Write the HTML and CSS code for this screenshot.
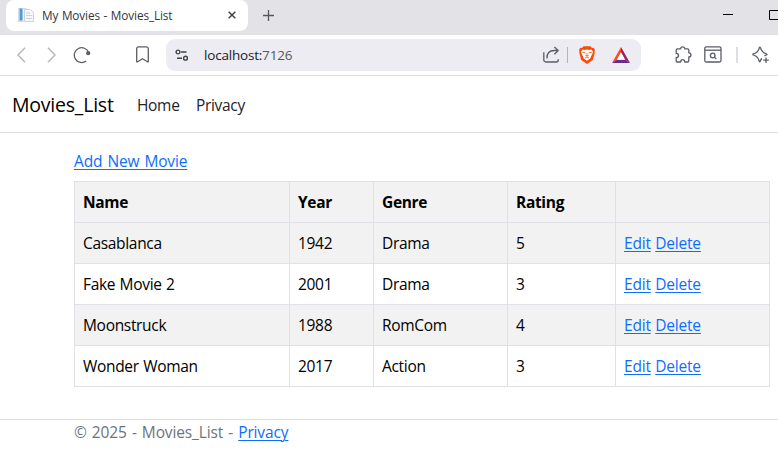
FILE: index.html
```html
<!DOCTYPE html>
<html lang="en">
<head>
<meta charset="utf-8">
<title>My Movies - Movies_List</title>
<link rel="stylesheet" href="styles.css">
</head>
<body>
<div class="tabstrip">
  <div class="tab">
    <svg class="favicon" width="16" height="16" viewBox="0 0 16 16"><path d="M.5 1.5h8l2 2v11h-10z" fill="#edf2f6" stroke="#d5dde4"/><path d="M1 1.5h3.5v12H1z" fill="#4d9ad5"/><path d="M1 1.5h1v12H1z" fill="#a5cdea"/><path d="M6.5 2.5h6l3 3v9h-9z" fill="#f5f7f9" stroke="#ccd4db"/><path d="M8 6h4M8 8.5h6M8 11.5h6" stroke="#cbd4dc"/></svg>
    <span class="tab-title">My Movies - Movies_List</span>
    <svg class="tab-close" width="8" height="8" viewBox="0 0 8 8"><path d="M.7.7l6.6 6.6M7.3.7L.7 7.3" stroke="#404349" stroke-width="1.5"/></svg>
  </div>
  <svg class="new-tab" width="11" height="11" viewBox="0 0 11 11"><path d="M5.5 0v11M0 5.5h11" stroke="#55575d" stroke-width="1.3"/></svg>
  <svg class="minimize" width="10" height="11" viewBox="0 0 10 11"><path d="M0 4.5h10" stroke="#000"/></svg>
  <svg class="maximize" width="10" height="10" viewBox="0 0 10 10"><path d="M.5.5h9v9h-9z" fill="none" stroke="#000"/></svg>
</div>
<div class="toolbar">
  <svg class="back" width="9" height="16" viewBox="0 0 9 16"><path d="M8 .8L1 8l7 7.2" class="nav-stroke"/></svg>
  <svg class="forward" width="9" height="16" viewBox="0 0 9 16"><path d="M1 .8L8 8l-7 7.2" class="nav-stroke"/></svg>
  <svg class="reload" width="18" height="18" viewBox="0 0 18 18"><path d="M13.2 15A7.4 7.4 0 1 1 15.6 6.5" class="line"/><circle cx="15.2" cy="7.2" r="2.1" fill="#5b5e66"/></svg>
  <svg class="bookmark" width="13" height="17" viewBox="0 0 13 17"><path d="M2.7.8h7.6a2 2 0 0 1 2 2v12.6q0 .8-.8.4L6.5 12.7l-5 3.1q-.8.4-.8-.4V2.8a2 2 0 0 1 2-2z" class="line"/></svg>
  <div class="address">
    <svg class="tune" width="14" height="12" viewBox="0 0 14 12"><g fill="none" stroke="#3f424a" stroke-width="1.4"><circle cx="3" cy="3" r="1.9"/><path d="M6 3h5.5M2 9.2h5"/><circle cx="10.5" cy="9.2" r="1.9"/></g></svg>
    <span class="url">localhost:<span class="port">7126</span></span>
    <svg class="share" width="17" height="17" viewBox="0 0 17 17"><path d="M.8 6.2V14a2 2 0 0 0 2 2h10.4a2 2 0 0 0 2-2v-.8M3.9 12.5c0-5 2.5-8 7.2-8h4M11.4 1l3.8 3.5-3.8 3.7" class="line"/></svg>
    <span class="rule"></span>
    <svg class="shield" width="16" height="18" viewBox="0 0 16 18"><path d="M4.5.2h7l1.5 1.7 1.6-.1L16 4l-.5 1.6.2 1.5-1.9 6.8L8 18l-5.8-4.1L.3 7.1l.2-1.5L0 4l1.4-2.2 1.6.1z" fill="#fb4b0b"/><path d="M3.5 3.6l2.2.5L8 3.5l2.3.6 2.2-.5 1.5 2.2-.9 2.6-1.2 2.1-.6 2L8 14.8l-3.3-2.3-.6-2-1.2-2.1L2 5.8z" fill="#fff"/><path d="M3.3 6.3l3.1.5M12.7 6.3l-3.1.5M8 7v3M6.3 9.3L8 10.2l1.7-.9M6 12l2-1 2 1" fill="none" stroke="#fb4b0b" stroke-width=".8"/></svg>
    <svg class="triangle" width="18" height="16" viewBox="0 0 18 16"><path d="M9 0L0 16l5-3L9 5.6z" fill="#ff4724"/><path d="M9 0l9 16-5-3L9 5.6z" fill="#9e1f63"/><path d="M0 16h18l-5-3.3H5z" fill="#662d91"/><path d="M9 5.3L13.2 12.8H4.8z" fill="#fff"/></svg>
  </div>
  <svg class="puzzle" width="18" height="18" viewBox="0 0 18 18"><path d="M3.5 2.8h3.1C6.7 1.5 7.5.8 8.7.8s2 .7 2.1 2h2.7q1.3 0 1.3 1.3v2.7c1.3.1 2.2.9 2.2 2.1s-.9 2-2.2 2.1v3.7q0 1.3-1.3 1.3h-2.8c0-1.6-.7-2.4-2-2.4s-2 .8-2 2.4H3.5q-1.3 0-1.3-1.3v-3c1.5-.1 2.3-.9 2.3-2.2s-.8-2-2.3-2.1V4.1q0-1.3 1.3-1.3z" class="line"/></svg>
  <svg class="window" width="18" height="17" viewBox="0 0 18 17"><rect x=".8" y=".8" width="16.2" height="15.2" rx="1.5" class="line"/><path d="M1 4.2h16" class="line"/><circle cx="8.7" cy="9.5" r="2.3" class="line"/><path d="M10.4 11.1l2 2" class="line"/></svg>
  <span class="rule rule-light"></span>
  <svg class="sparkle" width="18" height="18" viewBox="0 0 18 18"><path d="M10 12.4Q8.8 13.2 8.2 15.3Q7.7 16.3 7.2 15.3Q6.3 10.6 1.5 9Q.2 8.5 1.5 7.9Q6.2 6.5 7.3 1.8Q7.8.4 8.4 1.8Q9.8 6.6 14.3 7.9Q15.6 8.4 14.3 9L12.4 9.8" class="line"/><path d="M14 11.5v5.5M11.3 14.2h5.5" class="line"/></svg>
</div>
<header class="site-header">
  <span class="brand">Movies_List</span>
  <span class="nav-link home">Home</span>
  <span class="nav-link privacy">Privacy</span>
</header>
<main class="content">
  <a class="add">Add New Movie</a>
  <table class="movies">
    <colgroup><col class="c-name"><col class="c-year"><col class="c-genre"><col class="c-rating"><col class="c-actions"></colgroup>
    <thead><tr><th>Name</th><th>Year</th><th>Genre</th><th>Rating</th><th></th></tr></thead>
    <tbody>
      <tr><td>Casablanca</td><td>1942</td><td>Drama</td><td>5</td><td><a>Edit</a> <a>Delete</a></td></tr>
      <tr><td>Fake Movie 2</td><td>2001</td><td>Drama</td><td>3</td><td><a>Edit</a> <a>Delete</a></td></tr>
      <tr><td>Moonstruck</td><td>1988</td><td>RomCom</td><td>4</td><td><a>Edit</a> <a>Delete</a></td></tr>
      <tr><td>Wonder Woman</td><td>2017</td><td>Action</td><td>3</td><td><a>Edit</a> <a>Delete</a></td></tr>
    </tbody>
  </table>
</main>
<footer class="footer">© 2025 - Movies_List - <a>Privacy</a></footer>
</body>
</html>
```
FILE: styles.css
```css
* { box-sizing: border-box; }
body { margin: 0; height: 457px; overflow: hidden; background: #fff; color: #000; font: 15.5px/24px "Open Sans", "Noto Sans", sans-serif; letter-spacing: -0.32px; word-spacing: 0.7px; }
svg { display: block; flex: none; }
a { color: #0d6efd; text-decoration: underline; text-underline-offset: 2px; text-decoration-thickness: 1px; }
.line { fill: none; stroke: #5b5e66; stroke-width: 1.3; stroke-linejoin: round; }
.nav-stroke { fill: none; stroke: #b9b9bb; stroke-width: 1.5; }
.tabstrip { display: flex; height: 35px; background: #e3e2e7; overflow: hidden; }
.tab { display: flex; flex: none; width: 242px; height: 31px; margin-left: 6px; padding-left: 12px; background: #fff; border-radius: 8px; }
.favicon { margin-top: 7px; }
.tab-title { width: 186px; margin-left: 8px; font-size: 11.8px; line-height: 30px; color: #33353b; letter-spacing: -0.13px; white-space: nowrap; }
.tab-close { margin-top: 11px; }
.new-tab { margin: 10px 0 0 15px; }
.minimize { margin: 10px 0 0 449px; }
.maximize { margin: 10px 0 0 36px; }
.toolbar { display: flex; align-items: center; height: 41px; padding-bottom: 1px; border-bottom: 1px solid #dfdfe3; overflow: hidden; }
.back { margin-left: 17px; }
.forward { margin-left: 21px; }
.reload { margin-left: 17px; }
.bookmark { margin-left: 45px; }
.address { display: flex; flex: none; align-items: center; width: 475px; height: 32px; margin-left: 17px; padding-left: 9px; background: #edecf2; border-radius: 9px; }
.url { width: 339px; margin-left: 15px; font-size: 13.5px; letter-spacing: -0.2px; color: #202127; }
.port { color: #55575f; }
.rule { flex: none; width: 1px; height: 16px; margin-left: 7px; background: #b5b5bd; }
.shield { margin-left: 11px; }
.triangle { margin-left: 17px; }
.puzzle { margin-left: 33px; }
.window { margin-left: 12px; }
.rule-light { width: 2px; margin-left: 14px; background: #dddde5; }
.sparkle { margin-left: 14px; }
.site-header { display: flex; align-items: center; height: 57px; padding: 1px 0 0 12px; border-bottom: 1px solid #dee2e6; }
.brand { width: 125px; font-size: 19.5px; line-height: 30px; letter-spacing: -0.22px; }
.nav-link { color: #212529; }
.home { width: 59px; }
.content { padding: 16px 8px 0 74px; height: 286px; }
.add { display: block; width: max-content; margin-bottom: 8px; letter-spacing: -0.15px; word-spacing: 1.2px; }
.movies { width: 696px; table-layout: fixed; border-collapse: collapse; }
.movies th, .movies td { height: 41px; padding: 0 8px; border: 1px solid #dee2e6; text-align: left; }
.movies td:last-child { letter-spacing: -0.2px; }
.movies th { font-weight: 700; background: #f2f2f2; }
.movies tbody tr:nth-child(odd) { background: #f2f2f2; }
.c-name { width: 215px; }
.c-year { width: 84px; }
.c-genre { width: 134px; }
.c-rating { width: 108px; }
.c-actions { width: 154px; }
.footer { padding: 0 0 0 74px; border-top: 1px solid #dee2e6; color: #6c757d; letter-spacing: -0.13px; word-spacing: 1.2px; }
```
